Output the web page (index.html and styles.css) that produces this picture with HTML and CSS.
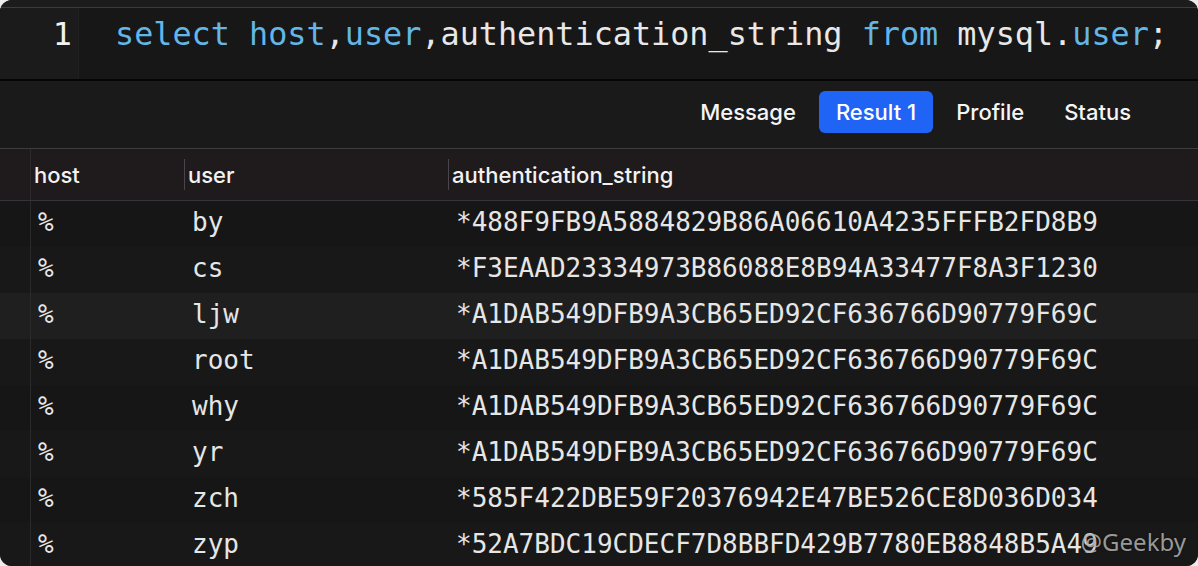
FILE: index.html
```html
<!DOCTYPE html>
<html>
<head>
<meta charset="utf-8">
<link rel="stylesheet" href="styles.css">
</head>
<body>
<div class="window">
  <div class="topbar"></div>
  <div class="editor">
    <div class="gutter">1</div>
    <div class="code"><span class="kw">select</span> <span class="kw">host</span>,<span class="kw">user</span>,authentication_string <span class="kw">from</span> mysql.<span class="kw">user</span>;</div>
  </div>
  <div class="tabbar">
    <div class="tab">Message</div>
    <div class="tab active">Result 1</div>
    <div class="tab">Profile</div>
    <div class="tab">Status</div>
  </div>
  <div class="grid">
    <div class="row head">
      <div class="cell idx"></div>
      <div class="cell"><span class="label">host</span></div>
      <div class="cell"><span class="label sep">user</span></div>
      <div class="cell"><span class="label sep">authentication_string</span></div>
    </div>
    <div class="row odd"><div class="cell idx"></div><div class="cell">%</div><div class="cell">by</div><div class="cell">*488F9FB9A5884829B86A06610A4235FFFB2FD8B9</div></div>
    <div class="row even"><div class="cell idx"></div><div class="cell">%</div><div class="cell">cs</div><div class="cell">*F3EAAD23334973B86088E8B94A33477F8A3F1230</div></div>
    <div class="row selected"><div class="cell idx"></div><div class="cell">%</div><div class="cell">ljw</div><div class="cell">*A1DAB549DFB9A3CB65ED92CF636766D90779F69C</div></div>
    <div class="row even"><div class="cell idx"></div><div class="cell">%</div><div class="cell">root</div><div class="cell">*A1DAB549DFB9A3CB65ED92CF636766D90779F69C</div></div>
    <div class="row odd"><div class="cell idx"></div><div class="cell">%</div><div class="cell">why</div><div class="cell">*A1DAB549DFB9A3CB65ED92CF636766D90779F69C</div></div>
    <div class="row even"><div class="cell idx"></div><div class="cell">%</div><div class="cell">yr</div><div class="cell">*A1DAB549DFB9A3CB65ED92CF636766D90779F69C</div></div>
    <div class="row odd"><div class="cell idx"></div><div class="cell">%</div><div class="cell">zch</div><div class="cell">*585F422DBE59F20376942E47BE526CE8D036D034</div></div>
    <div class="row even"><div class="cell idx"></div><div class="cell">%</div><div class="cell">zyp</div><div class="cell">*52A7BDC19CDECF7D8BBFD429B7780EB8848B5A49</div></div>
  </div>
  <div class="watermark">@Geekby</div>
</div>
</body>
</html>
```

FILE: styles.css
```css
html, body {
  margin: 0;
  padding: 0;
  background: #ececec;
}

.window {
  position: relative;
  width: 1198px;
  height: 566px;
  background: #1a1a1a;
  border-radius: 12px;
  overflow: hidden;
}

.topbar {
  height: 7px;
  background: #1c1c1c;
  border-bottom: 1px solid #3c3c3c;
}

.editor {
  display: flex;
  height: 71px;
  background: #171717;
  border-bottom: 2px solid #050505;
  font-family: "DejaVu Sans Mono", monospace;
  font-size: 31.8px;
  line-height: 40px;
}

.gutter {
  width: 72px;
  padding: 6px 6px 0 0;
  text-align: right;
  color: #f2f2f2;
  background: #1b1b1b;
  border-right: 1px solid #202020;
}

.code {
  padding: 6px 0 0 36px;
  color: #e8e8e8;
  white-space: pre;
}

.kw {
  color: #63b6e6;
}

.tabbar {
  display: flex;
  justify-content: flex-end;
  align-items: flex-start;
  gap: 6px;
  height: 57px;
  padding: 10px 50px 0 0;
  background: #1a1a1a;
  border-bottom: 1px solid #3d3d3d;
  font-family: Inter, "Noto Sans", sans-serif;
  font-size: 22px;
  font-weight: 500;
}

.tab {
  height: 42px;
  line-height: 42px;
  padding: 0 17px;
  color: #f5f5f5;
  border-radius: 6px;
}

.tab.active {
  background: #1f64f4;
  color: #ffffff;
}

.grid {
  display: flex;
  flex-direction: column;
}

.row {
  display: grid;
  grid-template-columns: 31px 154px 264px 1fr;
  height: 46px;
  font-family: "DejaVu Sans Mono", monospace;
  font-size: 26px;
  color: #e6e6e6;
}

.row.odd { background: #161616; }
.row.even { background: #181818; }
.row.selected { background: #1f1f1f; }

.cell {
  display: flex;
  align-items: center;
  padding-left: 7px;
  white-space: nowrap;
  margin-top: -4px;
}

.cell.idx {
  padding: 0;
  margin-top: 0;
  border-right: 1px solid #2a2a2a;
}

.row.head {
  height: 51px;
  background: #1f1a1c;
  border-bottom: 1px solid #38333a;
  font-family: Inter, "Noto Sans", sans-serif;
  font-size: 22px;
  font-weight: 500;
  color: #f2f2f2;
}

.row.head .cell {
  padding-left: 0;
  margin-top: 0;
  align-items: stretch;
}

.label {
  display: flex;
  align-items: center;
  padding-left: 3px;
  margin: 10px 0;
}

.label.sep {
  border-left: 1px solid #4a4548;
  margin-left: -1px;
}

.watermark {
  position: absolute;
  right: 12px;
  bottom: 8px;
  font-family: "Noto Sans", sans-serif;
  font-size: 24px;
  color: rgba(200, 200, 200, 0.75);
  text-shadow: 0 0 2px rgba(0, 0, 0, 0.6);
}
```
